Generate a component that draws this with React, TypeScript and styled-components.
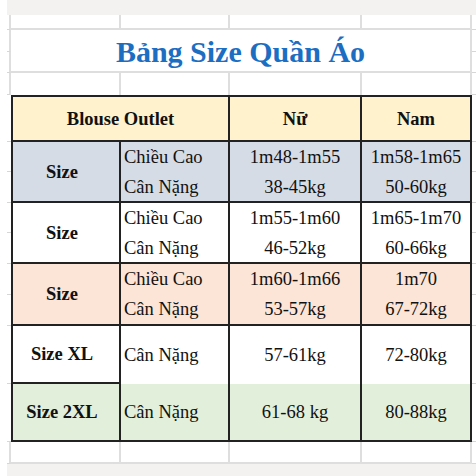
import styled, { createGlobalStyle } from "styled-components";

interface SizeRow {
    label: string;
    bg: string;
    attrs: string[];
    nu: string[];
    nam: string[];
    row: string;
    open?: boolean;
}

const sizeRows: SizeRow[] = [
    { label: "Size", bg: "#d6dce5", attrs: ["Chiều Cao", "Cân Nặng"], nu: ["1m48-1m55", "38-45kg"], nam: ["1m58-1m65", "50-60kg"], row: "6 / 8" },
    { label: "Size", bg: "#ffffff", attrs: ["Chiều Cao", "Cân Nặng"], nu: ["1m55-1m60", "46-52kg"], nam: ["1m65-1m70", "60-66kg"], row: "8 / 10" },
    { label: "Size", bg: "#fce4d6", attrs: ["Chiều Cao", "Cân Nặng"], nu: ["1m60-1m66", "53-57kg"], nam: ["1m70", "67-72kg"], row: "10 / 12" },
    { label: "Size XL", bg: "#ffffff", attrs: ["Cân Nặng"], nu: ["57-61kg"], nam: ["72-80kg"], row: "12", open: true },
    { label: "Size 2XL", bg: "#e2efda", attrs: ["Cân Nặng"], nu: ["61-68 kg"], nam: ["80-88kg"], row: "13" },
];

// spreadsheet rows: 14 in total, the size rows are two sheet rows each
const GUTTER_ROWS = Array.from({ length: 14 }, (_, i) => i + 1);
const TABLE_ROWS = [5, 6, 7, 8, 9, 10, 11, 12, 13];

function App() {
    return (
        <>
            <GlobalStyle />
            <Band $h={15} />
            <Sheet>
                {GUTTER_ROWS.map((r) => (
                    <Gutter key={"l" + r} $row={r} $side="left" $line={!TABLE_ROWS.includes(r)} />
                ))}
                {GUTTER_ROWS.map((r) => (
                    <Gutter key={"r" + r} $row={r} $side="right" />
                ))}

                {[2, 3, 4, 5].map((c) => (
                    <Blank key={"top" + c} $row={1} $col={c} />
                ))}
                <Title>Bảng Size Quần Áo</Title>
                {[2, 3, 4, 5].map((c) => (
                    <Blank key={"gap" + c} $row={4} $col={c} $open />
                ))}

                <Cell $row="5" $col="2 / 4" $bg="#fff2cc" $bold $top $left>Blouse Outlet</Cell>
                <Cell $row="5" $col="4" $bg="#fff2cc" $bold $top>Nữ</Cell>
                <Cell $row="5" $col="5" $bg="#fff2cc" $bold $top>Nam</Cell>

                {sizeRows.map((s, i) => [
                    <Cell key={"a" + i} $row={s.row} $col="2" $bg={s.bg} $bold $left $label>{s.label}</Cell>,
                    <Cell key={"b" + i} $row={s.row} $col="3" $bg={s.bg} $align="left" $open={s.open}>
                        {s.attrs.map((t) => <span key={t}>{t}</span>)}
                    </Cell>,
                    <Cell key={"c" + i} $row={s.row} $col="4" $bg={s.bg} $open={s.open}>
                        {s.nu.map((t) => <span key={t}>{t}</span>)}
                    </Cell>,
                    <Cell key={"d" + i} $row={s.row} $col="5" $bg={s.bg} $open={s.open}>
                        {s.nam.map((t) => <span key={t}>{t}</span>)}
                    </Cell>,
                ])}

                {[2, 3, 4, 5].map((c) => (
                    <Blank key={"bot" + c} $row={14} $col={c} />
                ))}
            </Sheet>
            <Band $h={12} />
        </>
    );
}

const GlobalStyle = createGlobalStyle`
    html, body {
        margin: 0;
        padding: 0;
        background: #fff;
    }
    body {
        font-family: "Liberation Serif", "Times New Roman", serif;
        color: #111;
    }
    * { box-sizing: border-box; }
`;

const Band = styled.div<{ $h: number }>`
    height: ${(p) => p.$h}px;
    margin-left: 7px;
    background: #f4f2f1;
`;

const Sheet = styled.div`
    display: grid;
    grid-template-columns: 4px 110px 109px 132px 110px 4px;
    grid-template-rows: 15px 22px 21px 22px 47px 30px 31px 30px 31px 31px 31px 58px 58px 22px;
    margin-left: 7px;
`;

const Gutter = styled.div<{ $row: number; $side: "left" | "right"; $line?: boolean }>`
    grid-row: ${(p) => p.$row};
    grid-column: ${(p) => (p.$side === "left" ? 1 : 6)};
    border-bottom: 1px solid #d6d6d6;
    ${(p) => p.$side === "left" && p.$line && "border-right: 2px solid #dedede;"}
`;

const Blank = styled.div<{ $row: number; $col: number; $open?: boolean }>`
    grid-row: ${(p) => p.$row};
    grid-column: ${(p) => p.$col};
    border-right: 2px solid #dedede;
    border-bottom: ${(p) => (p.$open ? "none" : "2px solid #dedede")};
`;

const Title = styled.div`
    grid-row: 2 / 4;
    grid-column: 2 / 6;
    display: flex;
    align-items: center;
    justify-content: center;
    border-right: 2px solid #dedede;
    border-bottom: 2px solid #dedede;
    color: #1b6ec2;
    font-size: 30px;
    font-weight: bold;
    padding-top: 2px;
`;

const Cell = styled.div<{
    $row: string;
    $col: string;
    $bg: string;
    $bold?: boolean;
    $align?: "left" | "center";
    $top?: boolean;
    $left?: boolean;
    $open?: boolean;
    $label?: boolean;
}>`
    grid-row: ${(p) => p.$row};
    grid-column: ${(p) => p.$col};
    display: flex;
    flex-direction: column;
    justify-content: center;
    align-items: ${(p) => (p.$align === "left" ? "flex-start" : "center")};
    padding: ${(p) => (p.$align === "left" ? "0 0 0 3px" : p.$label ? "0 8px 0 0" : "0")};
    background: ${(p) => p.$bg};
    border-right: 2px solid #222;
    border-bottom: ${(p) => (p.$open ? "none" : "2px solid #222")};
    border-top: ${(p) => (p.$top ? "2px solid #222" : "none")};
    border-left: ${(p) => (p.$left ? "2px solid #222" : "none")};
    font-size: 18.5px;
    line-height: 30px;
    font-weight: ${(p) => (p.$bold ? "bold" : "normal")};
    white-space: nowrap;
`;

export default App;
